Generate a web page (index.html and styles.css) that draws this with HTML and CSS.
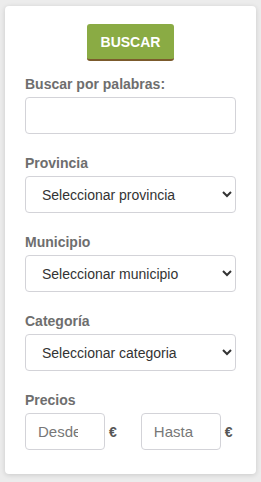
FILE: index.html
```html
<!DOCTYPE html>
<html lang="es">
<head>
    <meta charset="UTF-8">
    <meta name="viewport" content="width=device-width, initial-scale=1.0">
    <title>Buscador</title>
    <link rel="stylesheet" href="styles.css">
</head>
<body>
    <form class="search-card">
        <div class="actions">
            <button type="button" class="btn-search">BUSCAR</button>
        </div>
        <div class="field first">
            <label for="palabras">Buscar por palabras:</label>
            <input type="text" id="palabras" class="control">
        </div>
        <div class="field">
            <label for="provincia">Provincia</label>
            <select id="provincia" class="control">
                <option>Seleccionar provincia</option>
            </select>
        </div>
        <div class="field">
            <label for="municipio">Municipio</label>
            <select id="municipio" class="control">
                <option>Seleccionar municipio</option>
            </select>
        </div>
        <div class="field">
            <label for="categoria">Categoría</label>
            <select id="categoria" class="control">
                <option>Seleccionar categoria</option>
            </select>
        </div>
        <div class="field">
            <label for="desde">Precios</label>
            <div class="price-row">
                <div class="price">
                    <input type="text" id="desde" class="control price-input" placeholder="Desde">
                    <span class="currency">€</span>
                </div>
                <div class="price">
                    <input type="text" id="hasta" class="control price-input" placeholder="Hasta">
                    <span class="currency">€</span>
                </div>
            </div>
        </div>
    </form>
</body>
</html>
```

FILE: styles.css
```css
body {
    margin: 0;
    padding: 6px 5px 9px;
    background-color: #ececec;
    font-family: "Liberation Sans", Arial, sans-serif;
}
.search-card {
    background: #ffffff;
    border-radius: 4px;
    box-shadow: 0 1px 5px rgba(0, 0, 0, 0.15);
    padding: 18px 20px 24px;
}
.actions {
    display: flex;
    justify-content: center;
}
.btn-search {
    height: 37px;
    padding: 0 14px;
    background-color: #8aab44;
    color: #ffffff;
    font-family: inherit;
    font-size: 14px;
    font-weight: bold;
    border: none;
    border-bottom: 2px solid #7b5a2c;
    border-radius: 3px;
    cursor: pointer;
}
.field {
    margin-top: 19px;
}
.field.first {
    margin-top: 13px;
}
.field label {
    display: block;
    font-size: 14px;
    font-weight: bold;
    line-height: 20px;
    color: #6e6e6e;
    margin-bottom: 3px;
}
.control {
    display: block;
    box-sizing: border-box;
    width: 100%;
    height: 37px;
    padding: 0 12px;
    font-family: inherit;
    font-size: 14px;
    color: #333333;
    background-color: #ffffff;
    border: 1px solid #d3d3d8;
    border-radius: 4px;
    outline: none;
}
select.control {
    padding: 0 8px 0 12px;
}
.control::placeholder {
    color: #777777;
}
.price-row {
    display: flex;
    gap: 24px;
}
.price {
    display: flex;
    align-items: center;
    gap: 4px;
}
.price-input {
    width: 80px;
    padding: 0 26px 0 12px;
    font-size: 15px;
}
.currency {
    font-size: 14px;
    font-weight: bold;
    color: #555555;
}
```
